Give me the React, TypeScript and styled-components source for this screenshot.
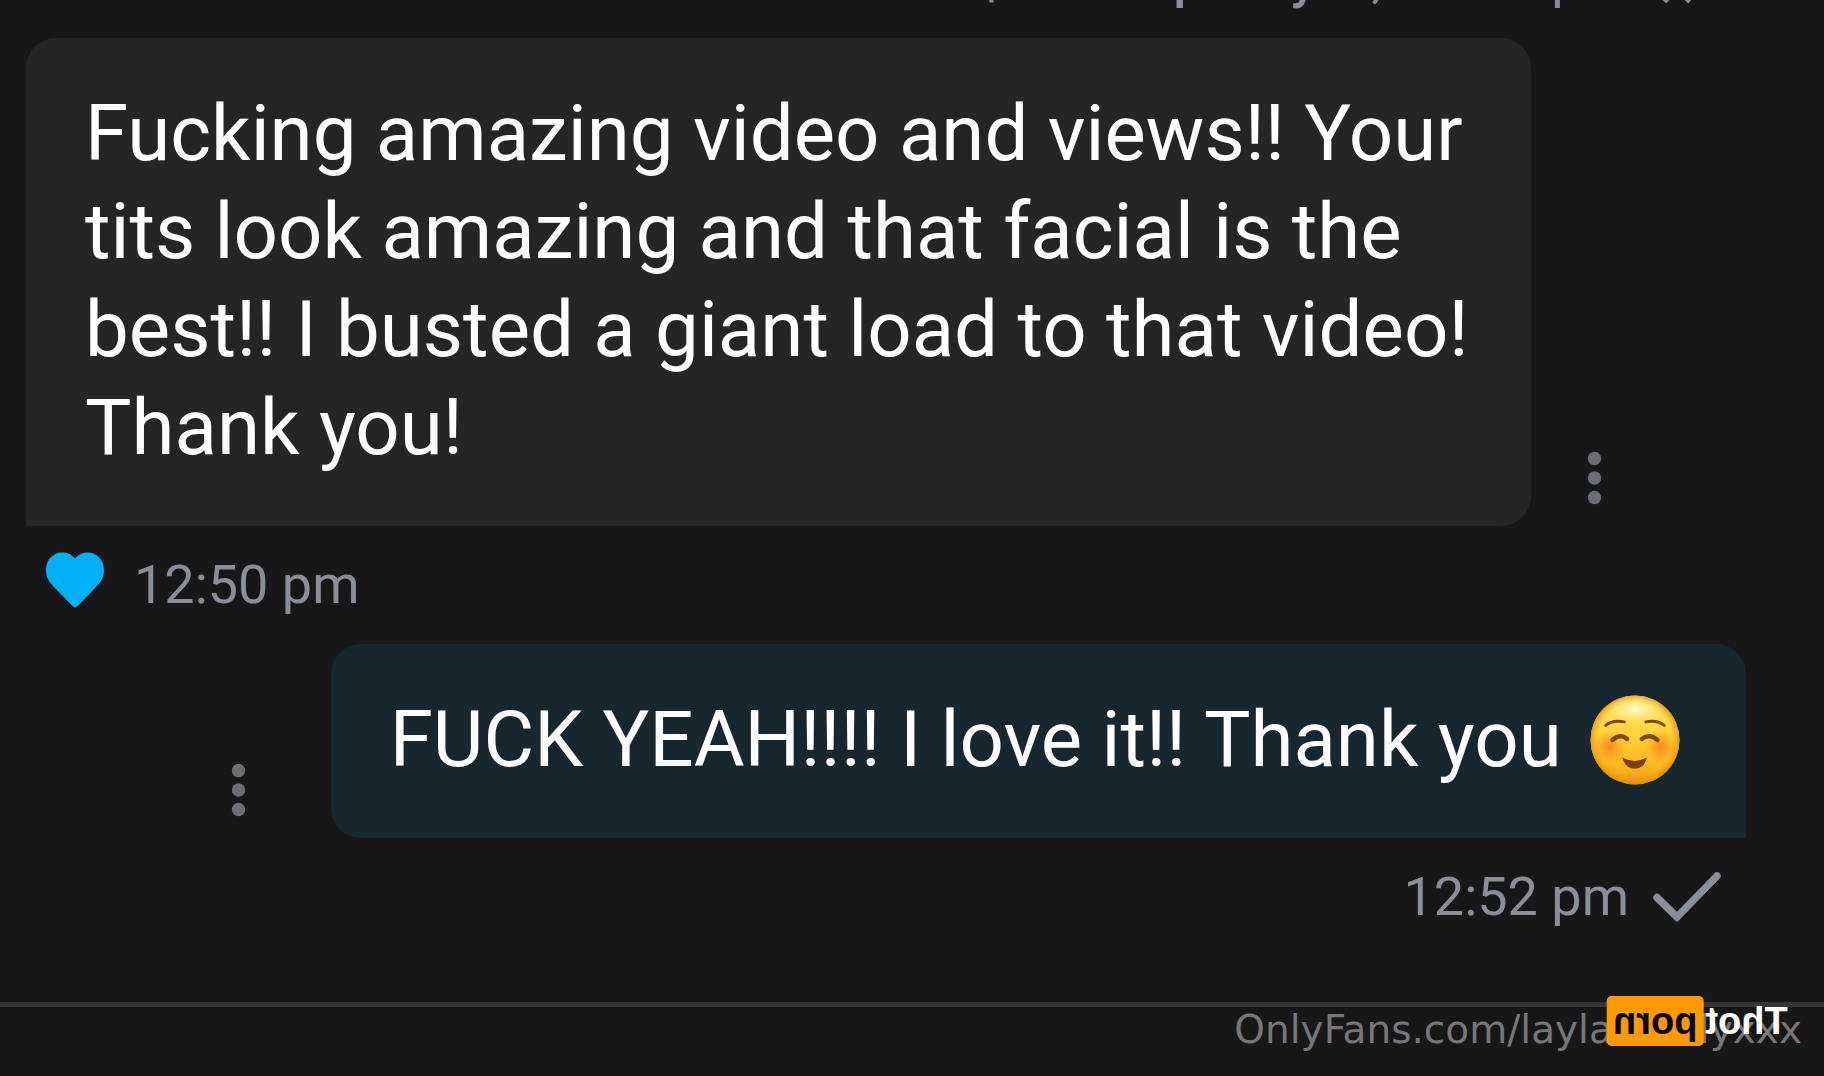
import React from 'react';
import styled, { createGlobalStyle } from 'styled-components';

const GlobalStyle = createGlobalStyle`
  * { box-sizing: border-box; }
  body { margin: 0; background: #171718; }
`;

const Page = styled.div`
  min-height: 100vh;
  display: flex;
  flex-direction: column;
  overflow: hidden;
  background: #171718;
  font-family: Roboto, "Noto Sans", sans-serif;
`;

/* The thread is scrolled, so its first status line sits mostly above the fold. */
const Thread = styled.main`
  display: flex;
  flex-direction: column;
  gap: 27px;
  margin-top: -53px;
  padding: 0 78px 73px 26px;
`;

const Message = styled.article`
  display: flex;
  flex-direction: column;
  gap: 27px;
`;

const BubbleRow = styled.div<{ $own?: boolean }>`
  display: flex;
  flex-direction: ${(p) => (p.$own ? 'row-reverse' : 'row')};
  align-items: flex-end;
  gap: ${(p) => (p.$own ? 73 : 43)}px;
`;

const Bubble = styled.p<{ $own?: boolean }>`
  margin: 0;
  max-width: 87.5%;
  padding: 47px 57px 49px 59px;
  border-radius: ${(p) => (p.$own ? '30px 30px 0 30px' : '30px 30px 30px 0')};
  background: ${(p) => (p.$own ? '#17272f' : '#252527')};
  color: #fefefe;
  font-size: 78px;
  line-height: 98px;
`;

const MenuButton = styled.button`
  flex: none;
  width: 40px;
  height: 60px;
  margin: 0 0 18px;
  padding: 0;
  border: 0;
  background: none;
  color: #6b6e72;
  cursor: pointer;
  svg { display: block; }
`;

const Status = styled.div<{ $own?: boolean }>`
  display: flex;
  align-items: center;
  gap: ${(p) => (p.$own ? 24 : 30)}px;
  padding: ${(p) => (p.$own ? '0 23px 0 0' : '0 0 0 18px')};
  justify-content: ${(p) => (p.$own ? 'flex-end' : 'flex-start')};
  color: #8a8e99;
  font-size: 54px;
  line-height: 64px;
  white-space: nowrap;
  svg { flex: none; }
`;

const Payment = styled.span`
  display: flex;
  gap: 8px;
  strong { font-weight: 500; }
`;

const LikeButton = styled.button`
  width: 60px;
  height: 60px;
  margin: -4px 0 4px;
  padding: 0;
  border: 0;
  background: none;
  color: #00b0f4;
  cursor: pointer;
  svg { display: block; }
`;

const Emoji = styled.svg`
  display: inline-block;
  width: 90px;
  height: 90px;
  margin: -10px 9px;
  vertical-align: -16px;
  overflow: visible;
`;

const EmojiLine = styled.span`
  display: flex;
  align-items: center;
  white-space: pre-wrap;
`;

const Footer = styled.footer`
  position: relative;
  display: flex;
  justify-content: flex-end;
  border-top: 5px solid #343439;
  padding: 0 22px 0 0;
`;

const Watermark = styled.span`
  display: flex;
  gap: 86px;
  color: #77777a;
  font-family: "DejaVu Sans", sans-serif;
  font-size: 39px;
  line-height: 46px;
`;

/* The site logo is printed in mirror writing over the watermark. */
const Logo = styled.span`
  position: absolute;
  top: -11px;
  right: 36px;
  display: flex;
  gap: 2px;
  transform: scaleX(-1);
  color: #ffffff;
  font-family: "Liberation Sans", Arial, sans-serif;
  font-size: 38px;
  font-weight: 700;
  line-height: 50px;
`;

const LogoBadge = styled.span`
  padding: 0 6px;
  border-radius: 5px;
  background: #ff9900;
  color: #000000;
`;

function Dots() {
  return (
    <MenuButton type="button" aria-label="Message options">
      <svg width="40" height="60" viewBox="0 0 40 60" fill="currentColor">
        <circle cx="20.5" cy="10.5" r="6.7" />
        <circle cx="20.5" cy="30" r="6.7" />
        <circle cx="20.5" cy="49.5" r="6.7" />
      </svg>
    </MenuButton>
  );
}

function Check({ double }: { double?: boolean }) {
  return (
    <svg
      width="70"
      height="56"
      viewBox="0 0 70 56"
      fill="none"
      stroke="currentColor"
      strokeWidth="7.5"
      strokeLinecap="round"
    >
      {double ? (
        <>
          <path d="M2 36 L13 47 L44 8" />
          <path d="M24 36 L35 47 L66 8" />
        </>
      ) : (
        <path d="M4 28.500 L24 48 L64 7" />
      )}
    </svg>
  );
}

function Heart() {
  return (
    <svg width="60" height="60" viewBox="0 0 60 60" fill="currentColor">
      <path d="M31 7.500 C35 3 39 1.500 43.500 1.500 C53 1.500 60 9 60 19 C60 26 57 31 52 36 L34 54.500 C32 57 30 57 28 54.500 L10 36 C5 31 2 26 2 19 C2 9 9 1.500 18.500 1.500 C23 1.500 27 3 31 7.500 Z" />
    </svg>
  );
}

function SmilingFace() {
  return (
    <Emoji viewBox="0 0 92 92" role="img" aria-label="smiling face">
      <defs>
        <linearGradient id="face" x1="0" y1="0" x2="0" y2="1">
          <stop offset="0" stopColor="#ffe873" />
          <stop offset="0.45" stopColor="#ffd338" />
          <stop offset="0.8" stopColor="#fdb51c" />
          <stop offset="1" stopColor="#f09a12" />
        </linearGradient>
        <radialGradient id="shine" cx="0.5" cy="0.5" r="0.5">
          <stop offset="0" stopColor="#fffbd2" />
          <stop offset="1" stopColor="#ffe873" stopOpacity="0" />
        </radialGradient>
        <radialGradient id="rim" cx="0.5" cy="0.5" r="0.5">
          <stop offset="0.82" stopColor="#f19a10" stopOpacity="0" />
          <stop offset="1" stopColor="#e08a10" stopOpacity="0.75" />
        </radialGradient>
        <radialGradient id="blush" cx="0.5" cy="0.5" r="0.5">
          <stop offset="0" stopColor="#fb7d18" stopOpacity="0.85" />
          <stop offset="1" stopColor="#fb8a18" stopOpacity="0" />
        </radialGradient>
      </defs>
      <circle cx="46" cy="46" r="45.500" fill="url(#face)" />
      <circle cx="46" cy="46" r="45.500" fill="url(#rim)" />
      <ellipse cx="46" cy="15" rx="30" ry="15" fill="url(#shine)" />
      <circle cx="20" cy="53" r="17" fill="url(#blush)" />
      <circle cx="72" cy="53" r="17" fill="url(#blush)" />
      <g fill="none" stroke="#7a4a08" strokeLinecap="round">
        <path d="M16 31 Q23 25 35 27.500" strokeWidth="3" />
        <path d="M57 27.500 Q68 25 76 31" strokeWidth="3" />
        <path d="M23 46 Q31 39 38 45" strokeWidth="4.5" />
        <path d="M53 45 Q61 39 69 46" strokeWidth="4.5" />
      </g>
      <path d="M33 64 Q46 71 58 64 Q56 75 45.500 75.500 Q36 75 33 64 Z" fill="#80400c" />
    </Emoji>
  );
}

export default function App() {
  return (
    <Page>
      <GlobalStyle />
      <Thread>
        <Status $own>
          <Payment>
            <strong>$15 not paid yet</strong>
            <span>,</span>
            <time>&nbsp;12:49 pm</time>
          </Payment>
          <Check double />
        </Status>
        <Message>
          <BubbleRow>
            <Bubble>
              Fucking amazing video and views!! Your tits look amazing and that facial is the best!! I
              busted a giant load to that video! Thank you!
            </Bubble>
            <Dots />
          </BubbleRow>
          <Status>
            <LikeButton type="button" aria-label="Unlike message">
              <Heart />
            </LikeButton>
            <time>12:50 pm</time>
          </Status>
        </Message>
        <Message>
          <BubbleRow $own>
            <Bubble $own>
              <EmojiLine>
                <span>FUCK YEAH!!!! I love it!! Thank you </span>
                <SmilingFace />
              </EmojiLine>
            </Bubble>
            <Dots />
          </BubbleRow>
          <Status $own>
            <time>12:52 pm</time>
            <Check />
          </Status>
        </Message>
      </Thread>
      <Footer>
        <Watermark>
          <span>OnlyFans.com/layla</span>
          <span>lyxxx</span>
        </Watermark>
        <Logo>
          <span>Thot</span>
          <LogoBadge>porn</LogoBadge>
        </Logo>
      </Footer>
    </Page>
  );
}
